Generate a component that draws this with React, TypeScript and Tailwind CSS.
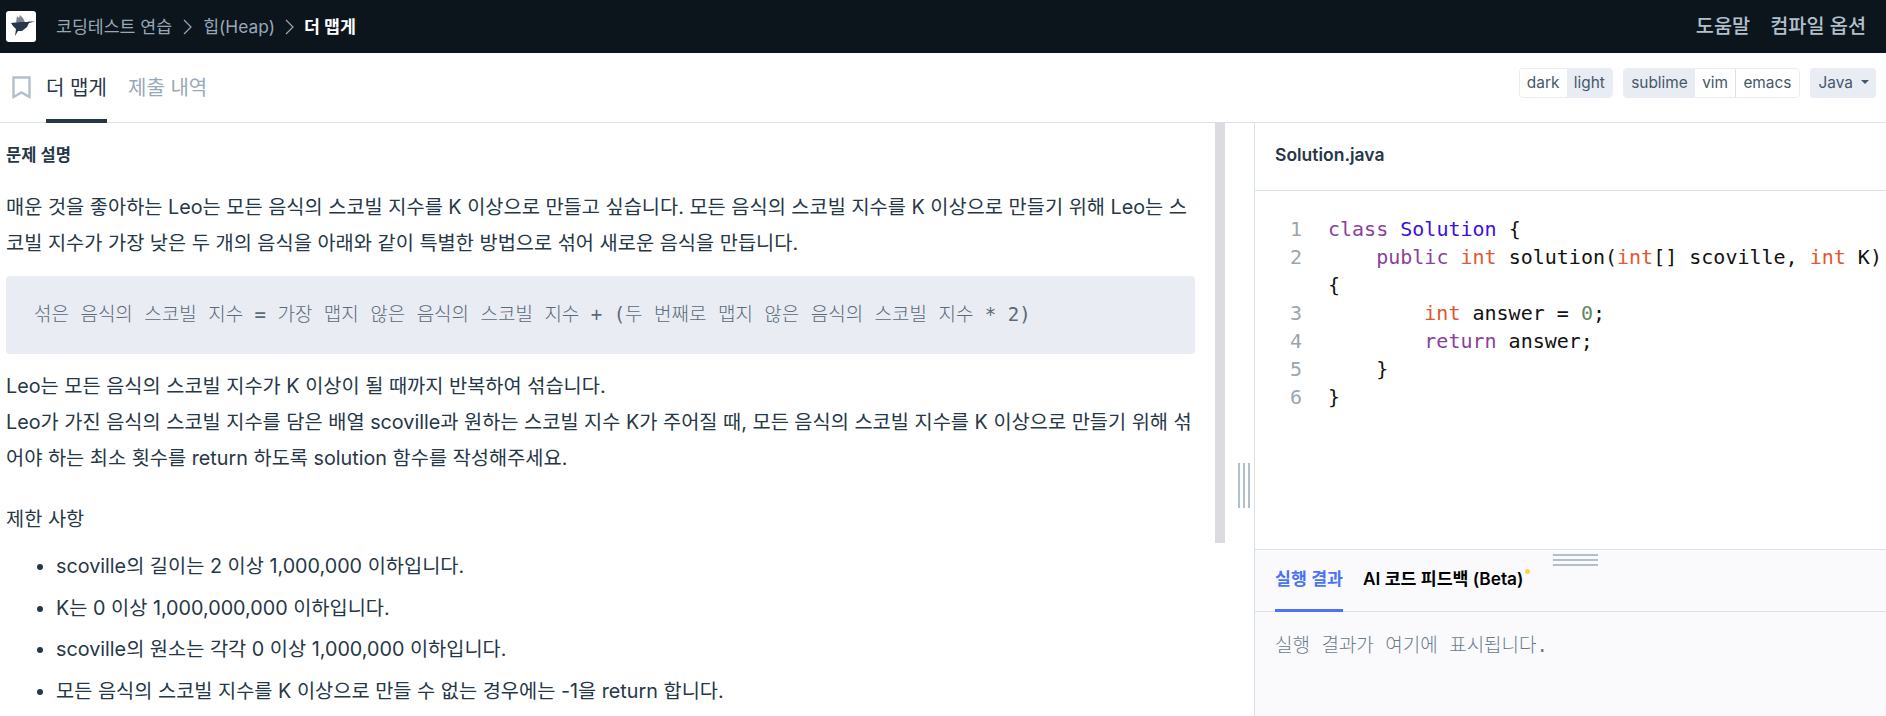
import React from "react";

const sans = "font-['Inter','Noto_Sans_CJK_KR',sans-serif]";
const mono = "font-['DejaVu_Sans_Mono','Noto_Sans_CJK_KR',monospace]";

const Chevron = () => (
    <svg width="9" height="16" viewBox="0 0 9 16" fill="none" stroke="#98a8b9" strokeWidth="1.2">
        <path d="M1 1l7 7-7 7" />
    </svg>
);

const Bird = () => (
    <svg width="30" height="31" viewBox="0 0 30 31">
        <path fill="#7a8591" d="M10 11.500L11 5l2 2 1-3 3 3 2 4.500z" />
        <path fill="#263747" d="M5 12l9-1h7l2-.5h6l-6 1.500-2 4-5 4h-4l-3 5 1-7-3-3z" />
    </svg>
);

const Seg = ({ label, active, border }: { label: string; active?: boolean; border?: boolean }) => (
    <div
        className={
            "flex items-center px-[7.200px] " +
            (active ? "bg-[#e9ecf3] " : "bg-white ") +
            (border ? "border-l border-[#d7e2eb]" : "")
        }
    >
        {label}
    </div>
);

const Header = () => (
    <div className="h-[53px] bg-[#0c151c] flex items-center justify-between pl-[6px] pr-[20px]">
        <div className="flex items-center">
            <div className="w-[30px] h-[31px] bg-white rounded-[3px] flex items-center justify-center">
                <Bird />
            </div>
            <div className="flex items-center ml-[20px] text-[17.300px] text-[#98a8b9]">
                <span>코딩테스트 연습</span>
                <span className="mx-[11px]"><Chevron /></span>
                <span>힙(Heap)</span>
                <span className="mx-[10px]"><Chevron /></span>
                <span className="text-white font-bold">더 맵게</span>
            </div>
        </div>
        <div className="flex items-center gap-[20px] text-[19.700px] font-medium text-[#b2c0cc]">
            <span>도움말</span>
            <span>컴파일 옵션</span>
        </div>
    </div>
);

const TabBar = () => (
    <div className="h-[70px] border-b border-[#d7e2eb] flex items-stretch justify-between pl-[12px] pr-[10px]">
        <div className="flex items-stretch">
            <div className="flex items-center">
                <svg width="19" height="23" viewBox="0 0 19 23" fill="none" stroke="#b2c0cc" strokeWidth="2.400">
                    <path d="M1.500 1.500h16v19.500l-8-4.500-8 4.500z" />
                </svg>
            </div>
            <div className="ml-[15px] w-[61px] flex items-center justify-center text-[20px] whitespace-nowrap text-[#263747] border-b-[4px] border-[#263747] -mb-px pt-[4px]">
                더 맵게
            </div>
            <div className="ml-[21px] flex items-center text-[20px] text-[#98a8b9]">제출 내역</div>
        </div>
        <div className="flex items-center gap-[10px] text-[15.400px] text-[#44576c] pb-[9px]">
            <div className="flex h-[30px] rounded-[4px] border border-[#e9ecf3] overflow-hidden">
                <Seg label="dark" />
                <Seg label="light" active />
            </div>
            <div className="flex h-[30px] rounded-[4px] border border-[#e9ecf3] overflow-hidden">
                <Seg label="sublime" active />
                <Seg label="vim" />
                <Seg label="emacs" border />
            </div>
            <div className="flex items-center h-[30px] rounded-[4px] bg-[#e9ecf3] pl-[9px] pr-[7px] gap-[8px]">
                Java
                <div className="w-0 h-0 border-x-[4px] border-x-transparent border-t-[4px] border-t-[#44576c] mb-[2px]" />
            </div>
        </div>
    </div>
);

const Problem = () => (
    <div className="w-[1215px] shrink-0 pl-[6px] pr-[20px] text-[19.750px] leading-[36px] text-[#263747]">
        <div className="pt-[14px] text-[16.500px] font-semibold">문제 설명</div>
        <p className="mt-[16px]">
            매운 것을 좋아하는 Leo는 모든 음식의 스코빌 지수를 K 이상으로 만들고 싶습니다. 모든 음식의 스코빌 지수를 K 이상으로 만들기 위해 Leo는 스코빌 지수가 가장 낮은 두 개의 음식을 아래와 같이 특별한 방법으로 섞어 새로운 음식을 만듭니다.
        </p>
        <div className={mono + " mt-[15px] h-[78px] flex items-center pl-[28px] pb-[3px] bg-[#e9ecf3] rounded-[4px] text-[19px] text-[#5a6a78] font-light whitespace-pre"}>
            섞은 음식의 스코빌 지수 = 가장 맵지 않은 음식의 스코빌 지수 + (두 번째로 맵지 않은 음식의 스코빌 지수 * 2)
        </div>
        <p className="mt-[14px]">
            Leo는 모든 음식의 스코빌 지수가 K 이상이 될 때까지 반복하여 섞습니다.
            <br />
            Leo가 가진 음식의 스코빌 지수를 담은 배열 scoville과 원하는 스코빌 지수 K가 주어질 때, 모든 음식의 스코빌 지수를 K 이상으로 만들기 위해 섞어야 하는 최소 횟수를 return 하도록 solution 함수를 작성해주세요.
        </p>
        <div className="mt-[25px]">제한 사항</div>
        <ul className="mt-[11px] pl-[50px] list-disc flex flex-col gap-[5.700px]">
            <li>scoville의 길이는 2 이상 1,000,000 이하입니다.</li>
            <li>K는 0 이상 1,000,000,000 이하입니다.</li>
            <li>scoville의 원소는 각각 0 이상 1,000,000 이하입니다.</li>
            <li>모든 음식의 스코빌 지수를 K 이상으로 만들 수 없는 경우에는 -1을 return 합니다.</li>
        </ul>
    </div>
);

const Gutter = () => (
    <div className="w-[29px] shrink-0 flex justify-center items-start pt-[340px] pl-[9px]">
        <div className="flex gap-[3px] h-[45px]">
            <div className="w-[2px] bg-[#b2c0cc]" />
            <div className="w-[2px] bg-[#b2c0cc]" />
            <div className="w-[2px] bg-[#b2c0cc]" />
        </div>
    </div>
);

const kw = "text-[#8a3f9e]";
const ty = "text-[#e4572e]";

const lines: [string, React.ReactNode][] = [
    ["1", <><span className={kw}>class</span> <span className="text-[#3a10e0]">Solution</span> {"{"}</>],
    ["2", <>{"    "}<span className={kw}>public</span> <span className={ty}>int</span> solution(<span className={ty}>int</span>[] scoville, <span className={ty}>int</span> K)</>],
    ["", <>{"{"}</>],
    ["3", <>{"        "}<span className={ty}>int</span> answer = <span className="text-[#5c8a5c]">0</span>;</>],
    ["4", <>{"        "}<span className={kw}>return</span> answer;</>],
    ["5", <>{"    }"}</>],
    ["6", <>{"}"}</>],
];

const Editor = () => (
    <div className="flex-1 min-w-0 border-l border-[#d7e2eb] flex flex-col">
        <div className="h-[68px] flex items-center pl-[20px] pb-[2px] border-b border-[#d7e2eb] text-[17.500px] font-semibold text-[#263747]">
            Solution.java
        </div>
        <div className={mono + " h-[358px] pt-[24px] text-[20px] leading-[28px] whitespace-pre text-[#111]"}>
            {lines.map(([no, code], i) => (
                <div key={i} className="flex">
                    <div className="w-[47px] text-right text-[#9aa5b0] shrink-0">{no}</div>
                    <div className="ml-[26px]">{code}</div>
                </div>
            ))}
        </div>
        <div className="flex-1 relative border-t border-[#d7e2eb] bg-[#fafafd]">
            <div className="absolute top-[4px] left-[298px] w-[45px] flex flex-col gap-[3px]">
                <div className="h-[2px] bg-[#b2c0cc]" />
                <div className="h-[2px] bg-[#b2c0cc]" />
                <div className="h-[2px] bg-[#b2c0cc]" />
            </div>
            <div className="h-[62px] border-b border-[#d7e2eb] flex items-stretch pl-[20px] text-[17.300px] font-semibold">
                <div className="flex items-center border-b-[3px] border-[#4a74f5] text-[#4a74f5] -mb-px pb-[1px]">실행 결과</div>
                <div className="relative flex items-center ml-[20px] text-black pb-[3px]">
                    AI 코드 피드백 (Beta)
                    <div className="absolute top-[19px] -right-[7px] w-[5px] h-[5px] rounded-full bg-[#fcd34d]" />
                </div>
            </div>
            <div className={mono + " pt-[21px] pl-[20px] text-[19px] leading-[24px] font-light text-[#6a7a89]"}>
                실행 결과가 여기에 표시됩니다.
            </div>
        </div>
    </div>
);

export default function App() {
    return (
        <div className={sans + " w-[1886px] h-[716px] overflow-hidden flex flex-col bg-white"}>
            <Header />
            <TabBar />
            <div className="flex-1 min-h-0 flex">
                <Problem />
                <div className="w-[10px] h-[420px] shrink-0 bg-[#dcdce0]" />
                <Gutter />
                <Editor />
            </div>
        </div>
    );
}
